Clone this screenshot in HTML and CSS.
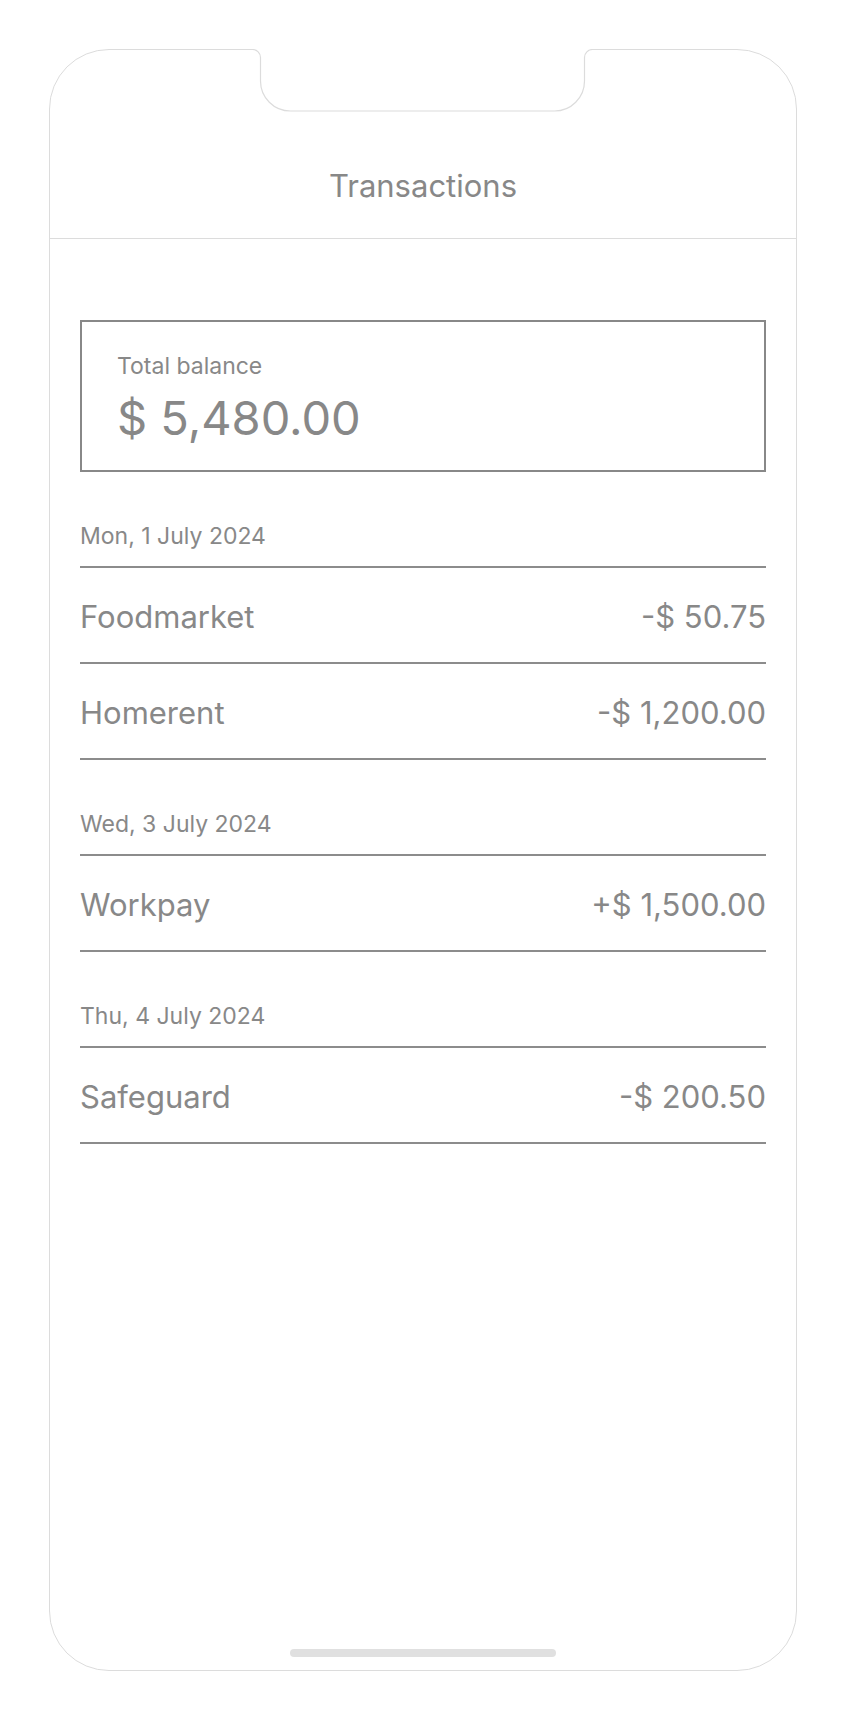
FILE: index.html
```html
<!DOCTYPE html>
<html lang="en">
<head>
<meta charset="utf-8">
<title>Transactions</title>
<link rel="stylesheet" href="styles.css">
</head>
<body>
<div class="phone">
  <svg class="notch" width="342" height="64" viewBox="0 0 342 64" aria-hidden="true">
    <rect x="0" y="0" width="342" height="2" fill="#fff"/>
    <path d="M0 0.5 H1.5 A8 8 0 0 1 9.5 8.5 V32 A30 30 0 0 0 39.5 62 H303.5 A30 30 0 0 0 333.5 32 V8.5 A8 8 0 0 1 341.5 0.5 H342" fill="#fff" stroke="#dcdcdc" stroke-width="1.2"/>
  </svg>
  <header class="header">
    <h1 class="title">Transactions</h1>
  </header>
  <main class="content">
    <section class="balance">
      <div class="balance-label">Total balance</div>
      <div class="balance-amount">$ 5,480.00</div>
    </section>
    <div class="date">Mon, 1 July 2024</div>
    <div class="row"><span class="name">Foodmarket</span><span class="amount">-$ 50.75</span></div>
    <div class="row"><span class="name">Homerent</span><span class="amount">-$ 1,200.00</span></div>
    <div class="date">Wed, 3 July 2024</div>
    <div class="row"><span class="name">Workpay</span><span class="amount">+$ 1,500.00</span></div>
    <div class="date">Thu, 4 July 2024</div>
    <div class="row"><span class="name">Safeguard</span><span class="amount">-$ 200.50</span></div>
  </main>
  <div class="home-bar"></div>
</div>
</body>
</html>
```

FILE: styles.css
```css
* { box-sizing: border-box; }

html, body {
  margin: 0;
  padding: 0;
  background: #fff;
}

body {
  font-family: Inter, "Noto Sans", sans-serif;
  color: #888;
}

.phone {
  position: relative;
  margin: 49px 0 0 49px;
  width: 748px;
  height: 1622px;
  border: 1px solid #dcdcdc;
  border-radius: 60px;
  display: flex;
  flex-direction: column;
  background: #fff;
}

.notch {
  position: absolute;
  top: -1px;
  left: 201px;
  display: block;
}

.header {
  height: 189px;
  padding-top: 120px;
  border-bottom: 1px solid #dcdcdc;
  text-align: center;
}

.title {
  margin: 0;
  font-size: 31px;
  line-height: 1;
  font-weight: 400;
  color: #888;
}

.content {
  flex: 1;
  padding: 81px 30px 0;
}

.balance {
  height: 152px;
  border: 2px solid #888;
  padding: 33px 35px 0;
}

.balance-label {
  font-size: 23px;
  line-height: 1;
}

.balance-amount {
  margin-top: 16px;
  font-size: 47px;
  line-height: 1;
}

.date {
  height: 96px;
  border-bottom: 2px solid #8c8c8c;
  display: flex;
  align-items: flex-end;
  padding-bottom: 18px;
  font-size: 23px;
  line-height: 1;
}

.row {
  height: 96px;
  border-bottom: 2px solid #8c8c8c;
  display: flex;
  align-items: center;
  justify-content: space-between;
  padding-top: 3px;
  font-size: 31px;
  line-height: 1;
}

.home-bar {
  align-self: center;
  width: 266px;
  height: 8px;
  border-radius: 4px;
  background: #e0e0e0;
  margin-bottom: 13px;
}
```
